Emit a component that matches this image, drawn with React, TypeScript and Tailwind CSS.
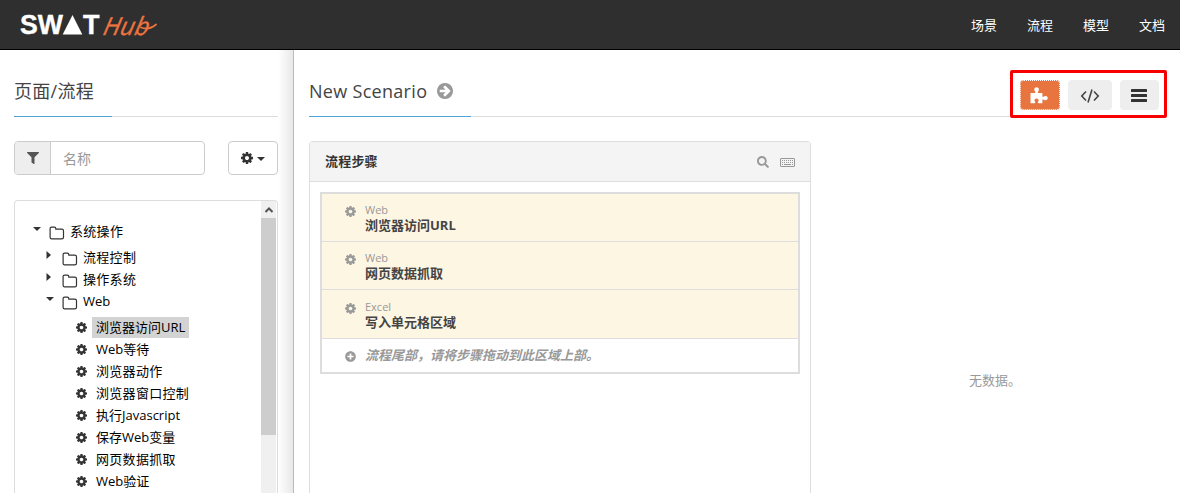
import React from "react";
import { FaFilter, FaSearch, FaPlusCircle } from "react-icons/fa";

function Cog({ className }: { className: string }) {
  return (
    <svg viewBox="0 128 1536 1536" className={className} fill="currentColor" fillRule="evenodd">
      <path d="M1024 896q0 106-75 181t-181 75-181-75-75-181 75-181 181-75 181 75 75 181zM1536 787v222q0 12-8 23t-20 13l-185 28q-19 54-39 91 35 50 107 138 10 12 10 25t-9 23q-27 37-99 108t-94 71q-12 0-26-9l-138-108q-44 23-91 38-16 136-29 186-7 28-36 28h-222q-14 0-24.500-8.500t-11.500-21.500l-28-184q-49-16-90-37l-141 107q-10 9-25 9-14 0-25-11-126-114-165-168-7-10-7-23 0-12 8-23 15-21 51-66.500t54-70.500q-27-50-41-99l-183-27q-13-2-21-12.500t-8-23.500v-222q0-12 8-23t19-13l186-28q14-46 39-92-40-57-107-138-10-12-10-24 0-10 9-23 26-36 98.500-107.500t94.500-71.500q13 0 26 10l138 107q44-23 91-38 16-136 29-186 7-28 36-28h222q14 0 24.500 8.500t11.500 21.500l28 184q49 16 90 37l142-107q9-9 24-9 13 0 25 10 129 119 165 170 7 8 7 22 0 12-8 23-15 21-51 66.500t-54 70.500q26 50 41 98l183 28q13 2 21 12.500t8 23.500z" />
    </svg>
  );
}

function ArrowCircle() {
  return (
    <svg viewBox="0 128 1536 1536" className="size-4 text-[#999]" fill="currentColor">
      <path d="M1285 896q0-27-18-45l-91-91-362-362q-18-18-45-18t-45 18l-91 91q-18 18-18 45t18 45l189 189h-502q-26 0-45 19t-19 45v128q0 26 19 45t45 19h502l-189 189q-19 19-19 45t19 45l91 91q18 18 45 18t45-18l362-362 91-91q18-18 18-45zm251 0q0 209-103 385.500t-279.500 279.500-385.500 103-385.500-103-279.500-279.500-103-385.500 103-385.500 279.500-279.500 385.500-103 385.500 103 279.500 279.500 103 385.500z" />
    </svg>
  );
}

function Puzzle() {
  return (
    <svg viewBox="0 0 18 17" className="mr-0.5 h-[17px] w-[18px]" fill="currentColor">
      <path d="M.5 6h4.300c.5 0 .8-.5.500-1C4.700 4 4.300 3.400 4.300 2.500 4.300 1.200 5.200.3 6.600.3s2.300.9 2.300 2.200c0 .9-.4 1.500-1 2.500-.3.500 0 1 .5 1h4v3.200c0 .6.500.9 1 .6.900-.6 1.400-.9 2.300-.9 1.200 0 2 .9 2 2.200s-.8 2.200-2 2.200c-.9 0-1.400-.4-2.300-.9-.5-.3-1 0-1 .6v3.200H8.600c-.8 0-1-.5-.7-1.100.4-.6.700-1 .7-1.700 0-1.100-.8-1.800-2-1.800s-2.100.7-2.100 1.800c0 .7.400 1.100.7 1.700.3.600.1 1.100-.6 1.100H.5z" />
    </svg>
  );
}

function Keyboard() {
  return (
    <svg viewBox="0 0 15 9" className="mt-px ml-[11px] h-[9px] w-[15px]" fill="none" stroke="#999">
      <rect x=".5" y=".5" width="14" height="8" rx=".5" />
      <path d="M2 2.500h11M2 4.500h11" strokeDasharray="1 1" />
      <path d="M2 6.500h1M4 6.500h7M12 6.500h1" />
    </svg>
  );
}

function Folder() {
  return (
    <svg viewBox="0 0 16 14" className="h-3.5 w-4 shrink-0" fill="none" stroke="#333" strokeWidth="1.2">
      <path d="M1.100 11.200V2.600Q1.100 1.100 2.600 1.100h2.800Q6.800 1.100 6.800 2.500v.6h6q1.700 0 1.700 1.700v6.400q0 1.600-1.700 1.600H2.700q-1.600 0-1.600-1.600z" />
    </svg>
  );
}

function Twisty({ open }: { open?: boolean }) {
  return (
    <svg viewBox="0 0 8 8" className="mb-[7px] size-2 shrink-0" fill="#333">
      {open ? <path d="M0 2h8L4 6z" /> : <path d="M.5 0v8l4.500-4z" />}
    </svg>
  );
}

function Branch({ label, open, pad }: { label: string; open?: boolean; pad: string }) {
  return (
    <div className={"flex h-[22px] items-center " + pad}>
      <Twisty open={open} />
      <span className="mt-px ml-2"><Folder /></span>
      <span className="ml-[5px]">{label}</span>
    </div>
  );
}

const leaves = [
  ["浏览器访问URL", ""],
  ["Web等待", ""],
  ["浏览器动作", "tracking-[0.3px]"],
  ["浏览器窗口控制", "tracking-[0.3px]"],
  ["执行Javascript", ""],
  ["保存Web变量", ""],
  ["网页数据抓取", "tracking-[0.3px]"],
  ["Web验证", ""],
];

const steps = [
  ["Web", "浏览器访问URL", "h-[47px]", "mt-0"],
  ["Web", "网页数据抓取", "h-[47px]", "mt-0"],
  ["Excel", "写入单元格区域", "h-[48px]", "mt-px"],
];

export default function App() {
  return (
    <div className="flex h-[493px] w-[1180px] flex-col overflow-hidden bg-white font-['Open_Sans','Noto_Sans_CJK_SC',sans-serif] text-[13px] text-[#333]">
      <header className="flex h-[50px] shrink-0 items-center justify-between border-b border-black bg-[#2f2f2f] pr-[15px] pl-5">
        <svg width="160" height="48" viewBox="20 1 160 48" role="img" aria-label="SWAT Hub">
          <g fill="#fff" stroke="#fff" strokeWidth=".4" fontFamily="Liberation Sans" fontWeight="700" fontSize="27">
            <text x="20" y="34.300" textLength="43" lengthAdjust="spacingAndGlyphs">SW</text>
            <text x="83" y="34.300" textLength="16.500" lengthAdjust="spacingAndGlyphs">T</text>
          </g>
          <path d="M72.500 15 82.300 34.500H62.700z" fill="#fff" />
          <text transform="translate(102 34.500) skewX(-12)" fill="#ec7440" stroke="#ec7440" strokeWidth=".3" fontFamily="Open Sans" fontStyle="italic" fontSize="25" textLength="46" lengthAdjust="spacingAndGlyphs">Hub</text>
          <path d="M141 27.500q8 3 15-3" fill="none" stroke="#ec7440" strokeWidth="1.800" strokeLinecap="round" />
        </svg>
        <nav className="flex gap-[30px] pt-[3px] text-white">
          <a>场景</a><a>流程</a><a>模型</a><a>文档</a>
        </nav>
      </header>
      <div className="flex min-h-0 flex-1">
        <aside className="flex w-[294px] shrink-0 flex-col border-r border-[#bbb] bg-[linear-gradient(to_right,#fff_278px,#e8e8e8_293px)] pr-[15px] pl-3.5">
          <div className="flex h-[67px] shrink-0 border-b border-[#ddd]">
            <h1 className="h-[67px] w-[98px] border-b border-[#4fa3d5] pt-[27px] text-lg leading-7 tracking-[0.3px] text-[#444]">页面/流程</h1>
          </div>
          <div className="mt-6 flex h-[34px] shrink-0 justify-between">
            <div className="flex w-[191px] overflow-hidden rounded border border-[#ccc]">
              <span className="flex w-9 items-center justify-center border-r border-[#ccc] bg-[#eee] text-[#555]"><FaFilter size={12} /></span>
              <span className="pt-1.5 pl-3 text-sm leading-[21px] text-[#999]">名称</span>
            </div>
            <button className="flex w-[50px] items-center justify-center gap-1 rounded border border-[#ccc]">
              <Cog className="size-3" />
              <svg viewBox="0 0 8 4" className="mt-0.5 h-1 w-2" fill="currentColor"><path d="M0 0h8L4 4z" /></svg>
            </button>
          </div>
          <div className="mt-[25px] flex min-h-0 flex-1 overflow-hidden rounded-t border-x border-t border-[#ddd]">
            <div className="min-w-0 flex-1 pt-5 text-black">
              <Branch label="系统操作" open pad="mb-1 pl-[18px] tracking-[0.3px]" />
              <Branch label="流程控制" pad="pl-[31px] tracking-[0.3px]" />
              <Branch label="操作系统" pad="pl-[31px] tracking-[0.3px]" />
              <Branch label="Web" open pad="mb-[3px] pl-[31px]" />
              {leaves.map(([label, tracking], i) => (
                <div key={label} className="flex h-[22px] items-center pl-[61px]">
                  <Cog className="size-[11px] shrink-0 text-[#333]" />
                  <span className={(i === 0 ? "h-[21px] bg-[#d3d3d3] " : "") + "ml-[5px] px-1 leading-[21px] " + tracking}>{label}</span>
                </div>
              ))}
            </div>
            <div className="mr-px w-[15px] bg-[#f0f0f0]">
              <div className="flex h-[17px] items-center justify-center">
                <svg viewBox="0 0 8 6" className="h-1.5 w-2" fill="none" stroke="#555" strokeWidth="2"><path d="M.5 5 4 1.500 7.500 5" /></svg>
              </div>
              <div className="h-[217px] bg-[#cdcdcd]" />
            </div>
          </div>
        </aside>
        <main className="relative flex min-w-0 flex-1 flex-col pr-3.5 pl-[15px]">
          <div className="flex h-[67px] shrink-0 border-b border-[#ddd]">
            <h2 className="flex h-[67px] w-[162px] items-center gap-2.5 border-b border-[#4fa3d5] pt-4 text-lg tracking-[0.3px] whitespace-nowrap text-[#444]">New Scenario <ArrowCircle /></h2>
          </div>
          <div className="absolute top-5 left-[716px] flex h-[48px] w-[157px] gap-2 rounded-[2px] border-3 border-[#f90000] bg-white pt-[7px] pl-[7px]">
            <button className="flex h-[30px] w-10 items-center justify-center rounded bg-[#e8743f] text-white outline-1 -outline-offset-1 outline-dotted outline-white"><Puzzle /></button>
            <button className="flex h-[30px] w-11 items-center justify-center rounded bg-[#eee] text-[#444]">
              <svg viewBox="0 0 20 14" className="mt-0.5 h-3.5 w-5" fill="none" stroke="currentColor" strokeWidth="1.600"><path d="M6 2.500 1.800 7 6 11.500M14 2.500 18.200 7 14 11.500M12 .5 8 13.500" /></svg>
            </button>
            <button className="flex h-[30px] w-[39px] items-start justify-start rounded bg-[#eee] pt-[9px] pl-[11px] text-[#333]">
              <svg viewBox="0 0 16 13" className="h-[13px] w-4" fill="currentColor"><rect width="16" height="3" rx=".5" /><rect y="5" width="16" height="3" rx=".5" /><rect y="10" width="16" height="3" rx=".5" /></svg>
            </button>
          </div>
          <div className="mt-6 flex min-h-0 flex-1">
            <section className="flex w-[502px] shrink-0 flex-col rounded-t border-x border-t border-[#ddd]">
              <div className="flex h-10 items-center border-b border-[#ddd] bg-[#f4f4f4] px-[15px]">
                <b className="flex-1 tracking-[0.2px]">流程步骤</b>
                <FaSearch size={12} color="#999" />
                <Keyboard />
              </div>
              <div className="mx-2.5 mt-2.5 border-2 border-[#ddd]">
                {steps.map(([kind, name, h, shift]) => (
                  <div key={name} className={"box-content border-b border-[#ddd] bg-[#fdf6e3] pl-[23px] flex " + h}>
                    <div className={"flex " + shift}>
                      <Cog className="mt-3 size-[11px] text-[#999]" />
                      <div className="ml-[9px] pt-2">
                        <div className="text-[11px] leading-[15px] text-[#999]">{kind}</div>
                        <div className="font-bold leading-4 text-[#444]">{name}</div>
                      </div>
                    </div>
                  </div>
                ))}
                <div className="flex h-[33px] items-center gap-[9px] pt-px pl-[23px] text-[#999]">
                  <FaPlusCircle size={11} />
                  <b className="italic">流程尾部，请将步骤拖动到此区域上部。</b>
                </div>
              </div>
            </section>
            <section className="flex-1 pt-[230px] pl-[158px] text-[#999]">无数据。</section>
          </div>
        </main>
      </div>
    </div>
  );
}
